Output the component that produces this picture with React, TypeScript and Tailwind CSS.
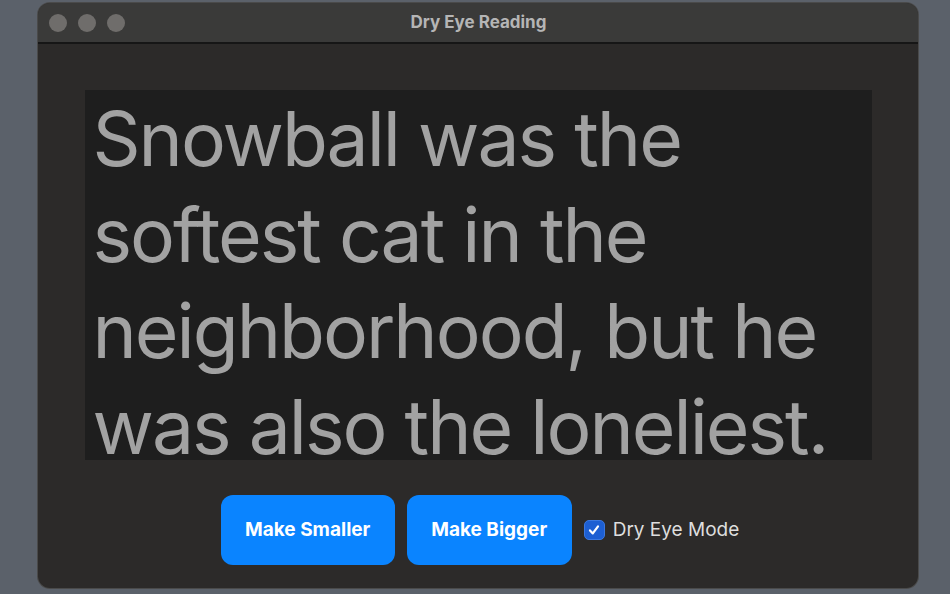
import React, { useState } from 'react'

const lines = [
  `Snowball was the`,
  `softest cat in the`,
  `neighborhood, but he`,
  `was also the loneliest.`,
]

const App = () => {
  const [dryEye, setDryEye] = useState(true)
  const [size, setSize] = useState(75)

  return (
    <div className="w-[950px] h-[594px] bg-[#5b616a] pt-[3px] pl-[38px] font-['Inter',sans-serif] overflow-hidden">
      <div className="w-[880px] h-[585px] rounded-[12px] bg-[#2c2a29] overflow-hidden flex flex-col shadow-[0_0_0_1px_#4a4a4a]">
        <div className="h-[41px] bg-[#3a3a39] border-b-2 border-[#161616] flex items-center relative shrink-0">
          <div className="flex gap-[11px] pl-[11px]">
            <span className="w-[18px] h-[18px] rounded-full bg-[#6f6d6b]" />
            <span className="w-[18px] h-[18px] rounded-full bg-[#6f6d6b]" />
            <span className="w-[18px] h-[18px] rounded-full bg-[#6f6d6b]" />
          </div>
          <div className="absolute inset-0 flex items-center justify-center text-[17px] font-bold text-[#b5b5b5] pl-[1px]">
            Dry Eye Reading
          </div>
        </div>
        <div className="flex-1 flex flex-col items-center">
          <div className="mt-[46px] w-[787px] h-[370px] bg-[#1e1e1e] pl-[8px] pt-[1px]">
            <p
              className="text-[#a2a2a2] leading-[96px] tracking-[-2px]"
              style={{ fontSize: `${size}px` }}
            >
              {lines.map((l) => (
                <span key={l} className="block whitespace-nowrap">
                  {l}
                </span>
              ))}
            </p>
          </div>
          <div className="mt-[35px] ml-[4px] flex items-center gap-[12px]">
            <button
              className="w-[174px] h-[70px] rounded-[12px] bg-[#0a84ff] text-white text-[19px] font-bold"
              onClick={() => setSize(size - 4)}
            >
              Make Smaller
            </button>
            <button
              className="w-[165px] h-[70px] rounded-[12px] bg-[#0a84ff] text-white text-[19px] font-bold"
              onClick={() => setSize(size + 4)}
            >
              Make Bigger
            </button>
            <label className="flex items-center gap-[8px] text-[19px] text-[#dedede] cursor-pointer">
              <span
                className="w-[21px] h-[20px] rounded-[5px] bg-[#1d5fd3] border border-[#3b78e0] flex items-center justify-center"
                onClick={() => setDryEye(!dryEye)}
              >
                {dryEye ? (
                  <svg width="14" height="14" viewBox="0 0 14 14" fill="none">
                    <path d="M3 7.4 L5.8 10.4 L11 3.4" stroke="white" strokeWidth="2.2" strokeLinecap="round" strokeLinejoin="round" />
                  </svg>
                ) : null}
              </span>
              Dry Eye Mode
            </label>
          </div>
        </div>
      </div>
    </div>
  )
}

export default App
